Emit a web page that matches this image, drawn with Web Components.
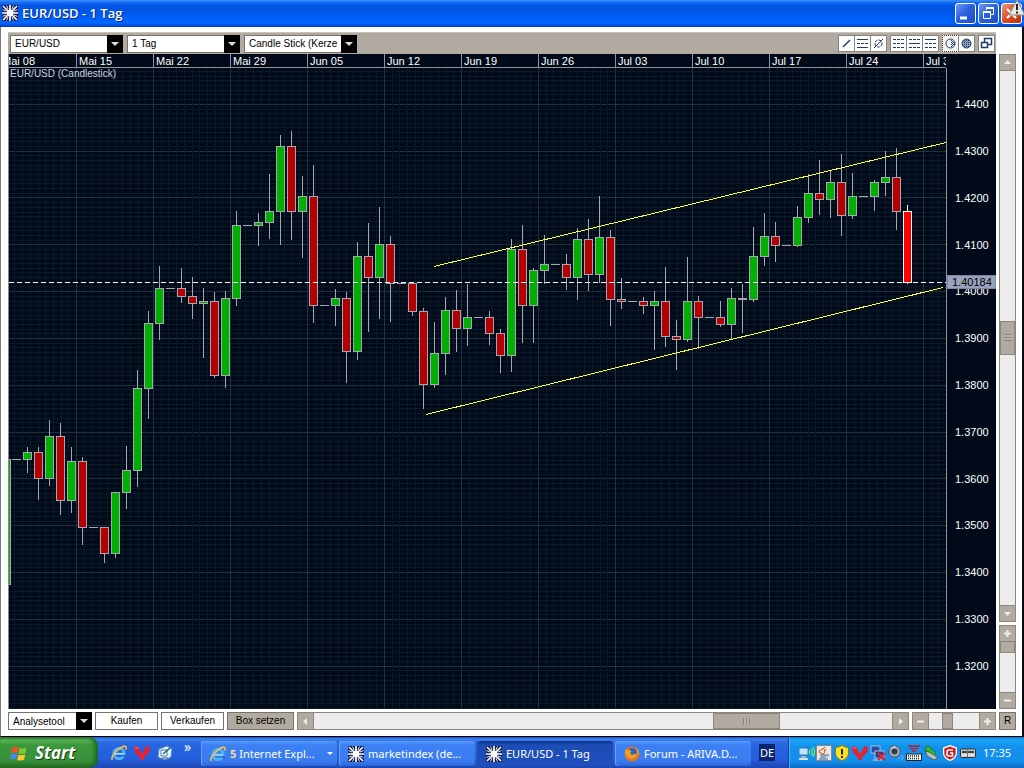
<!DOCTYPE html>
<html lang="de">
<head>
<meta charset="utf-8">
<title>EUR/USD - 1 Tag</title>
<style>
html, body { margin: 0; height: 100%; }
body { font-family: "Liberation Sans", Arial, sans-serif; font-size: 10px; background: #fff; overflow: hidden; }
</style>
</head>
<body>
<trading-desktop></trading-desktop>
<script>
const base = `*{box-sizing:border-box} :host([hidden]){display:none} button{font:inherit;color:inherit;padding:0;margin:0;border:0;background:none;display:block} svg{display:block}`;
function define(name, render, after) {
  customElements.define(name, class extends HTMLElement {
    connectedCallback() {
      if (this.shadowRoot) return;
      const root = this.attachShadow({ mode: 'open' });
      const t = document.createElement('template');
      t.innerHTML = '<style>' + base + '</style>' + render(this);
      root.append(t.content.cloneNode(true));
      if (after) after(this, root);
    }
  });
}

/* ---------- icons ---------- */
const star = `<rect width="16" height="16" fill="#0b1b50"/><g stroke="#fff"><path d="M8 0V16M0 8H16M1 1L15 15M15 1L1 15" stroke-width="1.7"/><path d="M4.6 .5L6 4M11.4 .5L10 4M4.600 15.500L6 12M11.400 15.500L10 12M.5 4.600L4 6M.5 11.400L4 10M15.500 4.600L12 6M15.500 11.400L12 10" stroke-width=".9"/></g><circle cx="8" cy="8" r="3.5" fill="#fff"/>`;
const ie = `<circle cx="8" cy="8.5" r="5.2" fill="none" stroke="#4db4f4" stroke-width="2.8"/><path d="M3.5 8.8H13" stroke="#8fd6ff" stroke-width="2"/><path d="M9.5 10H15V13.5Z" fill="#2a64df"/><path d="M1.2 15C-.6 11.5 7 3 12.8 1.2C15.6.5 15.4 3 14.6 4.6" fill="none" stroke="#f8c43c" stroke-width="1.5"/>`;
const heart = `<path d="M0 3C1 .5 4 .8 4.8 3.2L8 9.2L11.2 3.2C12 .8 15 .5 16 3C15.6 7.5 13 10.5 10.6 11.4L9.6 15H6.4L5.4 11.4C3 10.5.4 7.5 0 3Z" fill="#e8232c"/><path d="M1.3 3.2C2 2 3.6 2.2 4 3.8" stroke="#ff8a80" fill="none"/>`;
const icons = {
  star, ie, heart,
  desk: `<path d="M2 4L10 1L15 4L14 12L8 15L1 12Z" fill="#e4f4fc" stroke="#4a8cc0"/><path d="M4 5H10V11H4Z" fill="#fff" stroke="#3b7ab0"/><path d="M6 9L13 3" stroke="#27577f" stroke-width="1.6"/><path d="M5 13H11" stroke="#356"/>`,
  fox: `<circle cx="8" cy="8" r="7.5" fill="#e8761a"/><circle cx="8.3" cy="6.8" r="4.8" fill="#2f66b8"/><path d="M1 4C2 3 3 4 5 4.4C7 3.6 8 5 7 6.2C5.6 6.6 6.4 8.6 8.6 8.8C10.6 8.8 11.4 8 13 6.6C13 11.4 10 13 7 12.4C3 12 .8 8 1 4Z" fill="#f4a023"/><path d="M10 1.4C13 2.6 15 5 14.6 9C13.8 7 14 4 10 1.4Z" fill="#ffd050"/>`,
  net: `<rect x="1" y="3" width="9" height="7" fill="#bfe6ff" stroke="#2b76c4"/><rect x="3" y="11" width="5" height="2" fill="#9bb"/><rect x="1" y="13" width="9" height="2" fill="#dde"/><path d="M11 5q1.5 2 0 4M13 3.5q2.6 3.5 0 7M15 2q3 5 0 10" stroke="#7cf04c" stroke-width="1.2" fill="none"/>`,
  java: `<rect x=".5" y=".5" width="15" height="15" fill="#e9e9e2" stroke="#888"/><path d="M8.6 2C10 4-4 6 8 9M10 4.4C7 6 9 7 8.4 8" stroke="#e2541b" fill="none" stroke-width="1.2"/><path d="M4 10H11M4.6 12H10M3 14H12M11.4 9.6q2.4 0 0 2.2" stroke="#3b5c94" fill="none"/>`,
  warn: `<path d="M8 .5L14.5 3V8C14.5 12 11 14.6 8 15.6C5 14.6 1.5 12 1.5 8V3Z" fill="#ffe11a" stroke="#8b7a1e"/><path d="M8 4V9.4M8 11V13" stroke="#222" stroke-width="2"/>`,
  pcs: `<rect x="1" y="1" width="9" height="7" fill="#274a9c" stroke="#a8bde0"/><rect x="5" y="6" width="9" height="7" fill="#20408c" stroke="#a8bde0"/><path d="M3 15H12" stroke="#cdd"/><path d="M8 8L15 15M15 8L8 15" stroke="#e22" stroke-width="2.2"/>`,
  speaker: `<circle cx="6.5" cy="6.5" r="5.6" fill="#a8aeb6" stroke="#555"/><circle cx="6.5" cy="6.5" r="3" fill="#343a48"/><path d="M3 4q2-3 5-2" stroke="#eee" fill="none"/><path d="M10 14q3-1 4-4M12.500 15.500q3-1.500 3-4" stroke="#9ad" fill="none"/>`,
  modem: `<path d="M2 1H14M4 3.500H12M6 6H10" stroke="#b51f36" stroke-width="1.300"/><rect x=".5" y="9" width="15" height="6.500" fill="#f2f2f2" stroke="#222"/><path d="M2 11H14M2 13.500H14" stroke="#222" stroke-dasharray="1 1" stroke-width="1.500"/>`,
  usb: `<path d="M1 5L9 9L14 13L10 15L3 11Z" fill="#b9c2b9" stroke="#556"/><path d="M2 1L7 2L6 4L12 7L10 10L4 6L2 7Z" fill="#35c12f" stroke="#14701a" stroke-width=".7"/>`,
  gdata: `<path d="M8 0L15 2.500V8C15 12 11.500 15 8 16C4.500 15 1 12 1 8V2.500Z" fill="#fff"/><path d="M8 1.500L13.700 3.500V8C13.700 11.500 11 13.500 8 14.600C5 13.500 2.300 11.500 2.300 8V3.500Z" fill="#cf1c20"/><path d="M11 5H6.500Q5 5 5 7V9.500Q5 11 7 11H10.500V8H8" stroke="#fff" stroke-width="1.500" fill="none"/>`,
  drive: `<rect x=".5" y="4" width="15" height="8.500" rx="1" fill="#c9c9c9" stroke="#333"/><rect x="2" y="6" width="12" height="2" fill="#444"/><path d="M2 10H14" stroke="#fff"/><path d="M7.500 4V12" stroke="#777"/>`,
  alert: `<path d="M9 0L17 15H1Z" fill="#e8e8e4" stroke="#8a8a88"/><path d="M9 4V10M9 11.500V13.500" stroke="#222" stroke-width="2"/>`,
  flag: `<path d="M1 3Q4 1 7.500 2.500L6.500 8Q3.500 6.500 .2 8.200Z" fill="#f0532a"/><path d="M8.500 3Q12 4.500 15.500 2.500L14.500 8Q11 9.800 7.500 8.400Z" fill="#7ec83c"/><path d="M0 9.500Q3 7.800 6.300 9.300L5.300 14.500Q2.500 13 -.8 14.700Z" fill="#4a86f0"/><path d="M7.300 9.700Q10.500 11 14.200 9.200L13.200 14.500Q10 16.200 6.300 14.900Z" fill="#fbc928"/>`
};
define('app-icon', el => `<style>:host{display:block;width:16px;height:16px;flex:none}svg{overflow:visible}</style>
<svg width="16" height="16" viewBox="0 0 16 16" aria-hidden="true">${icons[el.getAttribute('name')]}</svg>`);

/* ---------- title bar ---------- */
define('caption-button', el => `<style>
:host{display:block}
button{width:21px;height:21px;border:1px solid #fff;border-radius:3px;background:linear-gradient(135deg,#6f9cf5,#2c62de 45%,#1c4cc4)}
:host([kind=close]) button{background:linear-gradient(135deg,#f09a80,#df4f28 45%,#b8300c)}</style>
<button aria-label="${el.getAttribute('label')}"><svg width="19" height="19" viewBox="0 0 19 19" fill="none" stroke="#fff" stroke-width="2">${
 { min: '<path d="M4 14H11" stroke-width="3"/>', max: '<path d="M7.500 6V4H14.500V10.500H12" stroke-width="1"/><path d="M7 4H15" /><path d="M4.500 8V14.500H11.500V8" stroke-width="1"/><path d="M4 8H12"/>', close: '<path d="M5 5L14 14M14 5L5 14" stroke-width="2.400"/>' }[el.getAttribute('kind')]}</svg></button>`);
define('title-bar', () => `<style>
:host{display:flex;position:relative;height:27px;align-items:center;padding:0 2px;gap:4px;
 background:linear-gradient(#3a93ff 0,#1c72f8 2px,#0558e8 5px,#0054e3 10px,#0060f8 18px,#0066ff 23px,#0048d0 26px,#0038b0)}
h1{flex:1;margin:0;padding-bottom:2px;font:600 13px/20px "Open Sans","Noto Sans",sans-serif;color:#fff;text-shadow:1px 1px #0a2a80}
.i{margin-bottom:2px}
.b{display:flex;gap:2px}
.alert{position:absolute;right:0;top:0}</style>
<app-icon class="i" name="star"></app-icon><h1>EUR/USD - 1 Tag</h1>
<div class="b"><caption-button kind="min" label="Minimieren"></caption-button><caption-button kind="max" label="Wiederherstellen"></caption-button><caption-button kind="close" label="Schließen"></caption-button></div>
<app-icon class="alert" name="alert"></app-icon>`);

/* ---------- controls ---------- */
define('combo-box', el => `<style>
:host{display:block;position:relative;height:18px;width:113px}
select{appearance:none;width:100%;height:100%;border:1px solid #77736c;border-radius:0;background:#fff;color:#000;font:inherit;padding:0 16px 0 4px;margin:0;display:block;outline:0}
svg{position:absolute;right:0;top:0;pointer-events:none}</style>
<select aria-label="${el.getAttribute('label')}"><option>${el.getAttribute('value')}</option></select>
<svg width="16" height="18"><path d="M0 0H16V18H0Z"/><path d="M4 7H12L8 11Z" fill="#ddd"/></svg>`);
define('push-button', el => `<style>
:host{display:block;height:18px}
button{width:100%;height:100%;border:1px solid #77736c;background:var(--face,#fff);color:#000;line-height:16px;text-align:center}</style>
<button><slot></slot></button>`);
const lines = (d1, d2, d3) => `<path d="M3 4.500H14" stroke-dasharray="${d1}"/><path d="M3 8.500H14" stroke-dasharray="${d2}"/><path d="M3 12.500H14" stroke-dasharray="${d3}"/>`;
const tools = {
  line: '<path d="M5 12L12 5" stroke-width="1.500"/>',
  par: lines('none', '3 1', 'none'),
  del: '<circle cx="8.500" cy="8.500" r="3.500" stroke-dasharray="3 1"/><path d="M4 13L13 4"/>',
  l1: lines('3 1', '3 1', '3 1'),
  l2: lines('3 1', 'none', '3 1') ,
  l3: lines('none', '3 1', '3 1'),
  c1: '<circle cx="8.500" cy="8.500" r="4.500"/><path d="M9 5.500H11M9 7.500H13M9 9.500H13M9 11.500H11M10 6.500H12M10 8.500H13M10 10.500H12" stroke-dasharray="1 1"/>',
  c2: '<circle cx="8.500" cy="8.500" r="4.500" fill="#8b9cb4"/><path d="M6 5.500H11M4 7.500H13M4 9.500H13M6 11.500H11" stroke-dasharray="1 1"/>',
  win: '<path d="M6.500 3.500H13.500V9.500H6.500Z" stroke-width="1.500"/><path d="M3.500 7.500H9.500V12.500H3.500Z" fill="#fff" stroke-width="1.500"/>'
};
define('tool-button', el => `<style>
:host{display:block}
button{width:17px;height:17px;margin-right:-1px;border:1px solid #8a857c;background:#fff}
:host([active]) button{border-style:dotted;border-color:#333;background:#f4f3f0}
svg{margin:-1px}</style>
<button aria-label="${el.getAttribute('label')}"><svg width="17" height="17" fill="none" stroke="#1c3c6c">${tools[el.getAttribute('name')]}</svg></button>`);
define('chart-toolbar', () => `<style>
:host{display:flex;align-items:center;gap:4px;height:22px;padding:0 2px;background:#b0aaa0;border-top:1px solid #c8c4bc}
.g{display:flex}
.s{flex:1}</style>
<combo-box label="Symbol" value="EUR/USD"></combo-box><combo-box label="Zeitraum" value="1 Tag"></combo-box><combo-box label="Darstellung" value="Candle Stick (Kerze"></combo-box>
<div class="s"></div>
<div class="g"><tool-button name="line" label="Linie"></tool-button><tool-button name="par" label="Parallelen"></tool-button><tool-button name="del" label="Linien löschen"></tool-button></div>
<div class="g"><tool-button name="l1" label="Raster fein"></tool-button><tool-button name="l2" label="Raster mittel"></tool-button><tool-button name="l3" label="Raster grob"></tool-button></div>
<div class="g"><tool-button active name="c1" label="Halbe Füllung"></tool-button><tool-button name="c2" label="Volle Füllung"></tool-button></div>
<div class="g"><tool-button name="win" label="Neues Fenster"></tool-button></div>`);

const glyphs = {
  up: '<path d="M4 9H11L7.500 5Z"/>', down: '<path d="M4 6H11L7.500 10Z"/>', left: '<path d="M9 4V11L5 7.500Z"/>', right: '<path d="M6 4V11L10 7.500Z"/>',
  plus: '<path d="M4 6.500H11V8.500H4ZM6.500 4H8.500V11H6.500Z"/>', minus: '<path d="M4 6.500H11V8.500H4Z"/>'
};
/* A bar with a button at each end; before/after are the track shares around the thumb. */
define('range-bar', el => {
  const a = n => el.getAttribute(n), v = el.hasAttribute('vertical');
  return `<style>
:host{display:flex;flex-direction:${v ? 'column' : 'row'};border:1px solid #8c867c;background:#ececec;${v ? 'width' : 'height'}:17px}
button{${v ? 'width:15px;height:15px' : 'width:15px;height:100%'};flex:none;background:#b0aaa0}
button:first-of-type{box-shadow:${v ? '0 1px' : '1px 0'} #8c867c}
button:last-of-type{box-shadow:${v ? '0 -1px' : '-1px 0'} #8c867c}
.b{flex:${a('before')} 1 0px}.a{flex:${a('after')} 1 0px}
.t{flex:0 0 ${a('size')}px;display:grid;place-items:center;background:#b0aaa0;outline:1px solid #8c867c;outline-offset:-1px}
.t i{display:${a('size') > 20 ? 'block' : 'none'};width:7px;height:7px;background:repeating-linear-gradient(${v ? '180deg' : '90deg'},#8a857b 0 1px,#b8b3aa 1px 3px)}</style>
<button aria-label="${a('l1')}"><svg width="15" height="15" fill="#f0eeea">${glyphs[a('g1')]}</svg></button><div class="b"></div><div class="t"><i></i></div><div class="a"></div><button aria-label="${a('l2')}"><svg width="15" height="15" fill="#f0eeea">${glyphs[a('g2')]}</svg></button>`;
});

/* ---------- chart ---------- */
/* centre x, high, body top, body bottom, low, direction */
const candles = [
[6,459,459,584,584,'g'],[16,459],[27,447,452,459,472,'g'],[38,447,452,478,499,'r'],[49,420,436,478,485,'g'],[60,423,436,500,514,'r'],[71,447,461,500,512,'g'],[82,457,461,527,544,'r'],[93,527],[104,527,527,553,562,'r'],[115,492,492,553,557,'g'],[126,446,470,492,508,'g'],[137,370,388,470,486,'g'],[148,311,323,388,418,'g'],[159,266,288,323,339,'g'],[170,288],[181,268,288,296,302,'r'],[192,277,296,303,318,'r'],[203,288,301,303,357,'g'],[214,292,301,375,377,'r'],[225,291,298,375,387,'g'],[236,211,225,298,305,'g'],[247,225],[258,213,222,225,245,'g'],[269,174,211,222,238,'g'],[280,135,146,211,244,'g'],[291,131,146,211,239,'r'],[302,176,196,211,257,'g'],[313,165,196,305,322,'r'],[324,305],[335,289,298,305,325,'g'],[346,292,298,351,382,'r'],[357,242,256,351,359,'g'],[368,223,256,277,331,'r'],[379,207,244,277,318,'g'],[390,236,244,283,321,'r'],[401,283],[412,283,283,311,315,'r'],[423,308,311,384,408,'r'],[434,322,353,384,387,'g'],[445,297,310,353,374,'g'],[456,290,310,328,351,'r'],[467,284,317,328,345,'g'],[478,317],[489,311,317,333,344,'r'],[500,329,333,355,372,'r'],[511,239,249,355,371,'g'],[522,225,249,305,342,'r'],[533,268,270,305,342,'g'],[544,235,264,270,283,'g'],[555,264],[566,254,264,277,289,'r'],[577,228,239,277,299,'g'],[588,219,239,274,290,'r'],[599,196,237,274,282,'g'],[610,230,237,299,325,'r'],[621,278,299,301,308,'r'],[632,301],[643,297,301,305,313,'r'],[654,291,301,305,349,'g'],[665,267,301,336,346,'r'],[676,320,336,339,369,'r'],[687,257,301,339,341,'g'],[698,296,301,317,348,'r'],[709,317],[720,301,317,324,326,'r'],[731,288,298,324,338,'g'],[742,284,298,299,332,'g'],[753,227,256,299,301,'g'],[764,213,236,256,265,'g'],[775,222,236,245,261,'r'],[786,245],[797,206,217,245,246,'g'],[808,174,193,217,222,'g'],[819,160,193,199,214,'r'],[830,171,182,199,217,'g'],[841,154,182,215,235,'r'],[852,173,196,215,218,'g'],[863,196],[874,180,182,196,210,'g'],[885,151,177,182,195,'g'],[896,148,177,211,229,'r'],[907,205,211,282,283,'now']];
define('candle-plot', () => {
  let grid = '', body = '';
  for (let i = 0; i <= 140; i++) {
    const y = Math.round(57 + i * 4.683);
    grid += `<rect x="9" y="${y}" width="2000" height="1" fill="${i % 10 ? '#0a1828' : '#22313f'}"/>`;
  }
  for (let i = 0; i <= 250; i++) {
    const x = Math.round(-1 + i * 7.7);
    grid += `<rect x="${x}" y="68" width="1" height="1000" fill="${i % 10 ? '#0a1828' : '#22313f'}"/>`;
  }
  for (const [x, hi, top, bot, lo, k] of candles) {
    if (!k) { body += `<rect x="${x - 4}" y="${hi}" width="9" height="1" fill="#a4a8b0"/>`; continue; }
    const edge = k === 'now' ? '#fff' : '#a4a8b0', fill = { g: '#00b000', r: '#b40000', now: '#f00' }[k];
    body += `<rect x="${x}" y="${hi}" width="1" height="${lo - hi + 1}" fill="${edge}"/><rect x="${x - 4}" y="${top}" width="9" height="${bot - top + 1}" fill="${edge}"/>`;
    if (bot - top > 1) body += `<rect x="${x - 3}" y="${top + 1}" width="7" height="${bot - top - 1}" fill="${fill}"/>`;
  }
  return `<style>:host{display:block;overflow:hidden;min-height:0}svg{width:100%;height:100%}</style>
<svg shape-rendering="crispEdges" role="img" aria-label="Kerzenchart EUR/USD"><g transform="translate(-9 -68)">${grid}${body}
<path d="M9 282.500H4000" stroke="#f4f8ff" stroke-dasharray="5 3"/>
<path d="M434 266.500L946 142.500M426 414.500L943 287.500" stroke="#ffff3c"/></g></svg>`;
});
define('candle-chart', () => {
  const dates = ['Mai 08','Mai 15','Mai 22','Mai 29','Jun 05','Jun 12','Jun 19','Jun 26','Jul 03','Jul 10','Jul 17','Jul 24','Jul 31'];
  const prices = Array.from({ length: 13 }, (_, i) => (1.44 - i / 100).toFixed(4));
  return `<style>
:host{display:grid;position:relative;grid-template:13px 1fr / 1fr 50px;background:#000a18;border-left:1px solid #888;color:#fff;font-size:11px;min-height:0;min-width:0}
.d{display:flex;overflow:hidden;border-bottom:1px solid #8d949c;height:14px}
.d span{flex:0 0 77px;padding-left:2px;line-height:14px;border-left:1px solid #8d949c;white-space:nowrap}
.d span:first-child{margin-left:-10px}
candle-plot{grid-area:2/1;margin-top:1px}
.p{grid-area:1/2/3/3;border-left:1px solid #8d949c;margin-top:14px;padding:13px 0 20px 8px;display:grid;grid-auto-rows:1fr;align-items:center;line-height:14px}
.n{position:absolute;left:1px;top:14px;font-size:10px;line-height:11px;color:#c8d2e0}
.c{position:absolute;right:0;top:221px;width:49px;height:14px;padding-left:5px;line-height:14px;background:#98a2bc;color:#000;outline:1px solid #7c86a0;outline-offset:-1px}</style>
<div class="d">${dates.map(d => `<span>${d}</span>`).join('')}</div><candle-plot></candle-plot>
<div class="p">${prices.map(p => `<span>${p}</span>`).join('')}</div>
<div class="n">EUR/USD (Candlestick)</div><div class="c">1.40184</div>`;
});

define('chart-window', () => `<style>
:host{display:flex;flex-direction:column;min-height:0;background:#fff;border-right:2px solid #0a0a14;border-left:1px solid #7a7a7a;border-bottom:1px solid #000;padding:5px 6px 6px 7px}
.m{flex:1;min-height:0;display:grid;grid-template:22px minmax(0,1fr) / minmax(0,1fr) 17px;column-gap:3px}
.v{grid-column:2;display:flex;flex-direction:column;gap:3px}
.v range-bar:first-child{flex:1}
.v range-bar:last-child{height:84px}
.f{display:flex;gap:3px;margin-top:3px}
.f range-bar{height:18px}
.f range-bar:nth-of-type(1){flex:1}</style>
<div class="m"><chart-toolbar></chart-toolbar><div></div><candle-chart></candle-chart>
<div class="v"><range-bar vertical g1="up" g2="down" before="250" after="251" size="34" l1="Nach oben" l2="Nach unten"></range-bar>
<range-bar vertical g1="plus" g2="minus" before="0" after="39" size="12" l1="Vergrößern" l2="Verkleinern"></range-bar></div></div>
<div class="f"><combo-box style="width:84px" label="Werkzeug" value="Analysetool"></combo-box>
<push-button style="width:63px">Kaufen</push-button><push-button style="width:63px">Verkaufen</push-button><push-button style="width:67px;--face:#b0aaa0">Box setzen</push-button>
<range-bar g1="left" g2="right" before="398" after="113" size="67" l1="Nach links" l2="Nach rechts"></range-bar>
<range-bar style="width:84px" g1="minus" g2="plus" before="14" after="26" size="11" l1="Verkleinern" l2="Vergrößern"></range-bar>
<push-button style="width:17px;--face:#b0aaa0">R</push-button></div>`);

/* ---------- taskbar ---------- */
define('task-button', el => `<style>
:host{display:block;flex:0 1 136px;min-width:0}
button{display:flex;width:100%;height:25px;align-items:center;gap:4px;padding:0 4px 0 9px;border-radius:3px;color:#fff;text-align:left;white-space:nowrap;background:linear-gradient(#5a9bff,#3c80f4 4px,#3a7cf0 20px,#2c66d8);box-shadow:inset 1px 0 #6aa2fa}
:host([active]) button{background:linear-gradient(#12348c,#1c4cb4 4px,#1f50bc);box-shadow:none}
span{flex:1}</style>
<button><app-icon name="${el.getAttribute('icon')}"></app-icon><span><slot></slot></span>${el.hasAttribute('menu') ? '<svg width="6" height="4"><path d="M0 0H6L3 3Z" fill="#fff"/></svg>' : ''}</button>`);
define('task-bar', () => `<style>
:host{display:flex;height:31px;align-items:stretch;color:#fff;font:11px/16px "Noto Sans","Open Sans",sans-serif;
 background:linear-gradient(#1c4cc0,#3b82f0 2px,#2a66e0 6px,#245edb 22px,#1c48b4)}
.start{width:98px;flex:none;display:flex;align-items:center;gap:8px;padding:0 0 0 11px;border-radius:0 9px 9px 0;font:italic bold 17px/24px "Open Sans","Noto Sans",sans-serif;text-shadow:1px 1px 1px #123c10;
 background:linear-gradient(#2c7a2c,#5ab45a 3px,#3c983c 8px,#389038 24px,#246c24);box-shadow:inset -3px 0 4px #1c641c}
.q{display:flex;gap:7px;align-items:center;padding-left:13px;width:103px;flex:none}
.q b{font:14px/12px "Noto Sans",sans-serif;padding:0 0 12px 4px}
.w{display:flex;flex:1;gap:2px;padding-top:4px;min-width:0}
.l{flex:none;width:16px;margin:7px 13px 7px 8px;background:#0c2470;line-height:17px;text-align:center}
.t{flex:none;width:236px;display:flex;align-items:center;gap:2px;padding-left:10px;background:linear-gradient(#0c78d8,#1ca4f8 3px,#1290ec 10px,#1290ec 24px,#0c68c4);box-shadow:inset 1px 0 #0c3c90,inset 2px 0 #38b8fc}
.t span{margin-left:5px}</style>
<button class="start"><app-icon name="flag"></app-icon>Start</button>
<div class="q"><app-icon name="ie"></app-icon><app-icon name="heart"></app-icon><app-icon name="desk"></app-icon><b>»</b></div>
<div class="w"><task-button menu icon="ie"><b style="color:#ffd9a0">5</b> Internet Expl...</task-button><task-button icon="star">marketindex (de...</task-button><task-button active icon="star">EUR/USD - 1 Tag</task-button><task-button icon="fox">Forum - ARIVA.D...</task-button></div>
<div class="l">DE</div>
<div class="t">${['net','java','warn','heart','pcs','speaker','modem','usb','gdata','drive'].map(n => `<app-icon name="${n}"></app-icon>`).join('')}<span>17:35</span></div>`);

define('trading-desktop', () => `<style>:host{display:grid;grid-template-rows:27px minmax(0,1fr) 31px;height:100vh;min-height:400px}</style>
<title-bar></title-bar><chart-window></chart-window><task-bar></task-bar>`);
</script>
</body>
</html>
